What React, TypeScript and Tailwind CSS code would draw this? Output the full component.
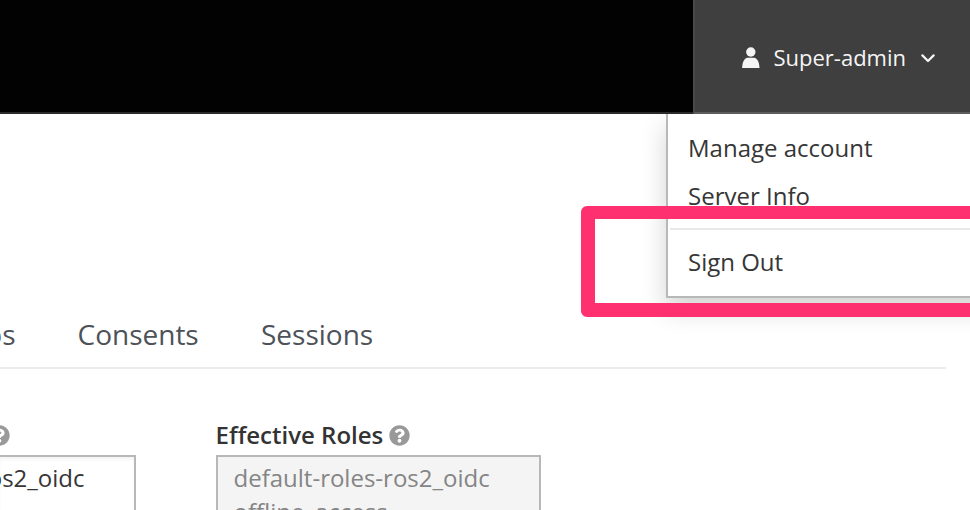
import { FaQuestionCircle } from "react-icons/fa";

function UserIcon() {
  return (
    <svg width="18" height="22" viewBox="0 0 18 22" fill="#f5f5f5" className="shrink-0">
      <circle cx="8.8" cy="5" r="4.7" />
      <path d="M0.1 21C0.3 14.2 3 10.9 5.4 10.7H12.2C14.6 10.9 17.3 14.2 17.5 21Z" />
    </svg>
  );
}

function ChevronIcon() {
  return (
    <svg width="14" height="9" viewBox="0 0 14 9" fill="none" stroke="#f5f5f5" strokeWidth="2.2" className="shrink-0">
      <path d="M1.4 1.4L7 7L12.6 1.4" strokeLinecap="round" strokeLinejoin="round" />
    </svg>
  );
}

function Header() {
  return (
    <header className="flex h-[114px] justify-end bg-[#020202]">
      <div className="flex-1 border-b-2 border-[#2b2a2b]" />
      <div className="flex w-[277px] items-center border-b-2 border-l-2 border-b-[#5d5b5d] border-l-[#494949] bg-[#3f3f3f] pt-[4px] pl-[46.5px] text-[#f5f5f5]">
        <UserIcon />
        <span className="ml-[14px] w-[147.5px] pb-[2px] text-[22px] leading-[34px] whitespace-nowrap">Super-admin</span>
        <ChevronIcon />
      </div>
    </header>
  );
}

function UserMenu() {
  return (
    <div className="absolute top-[114px] left-[666px] h-[184px] w-[340px] border-b-2 border-l-2 border-[#b8b8b8] bg-white text-[24px] leading-[48px] text-[#363636] shadow-[0_12px_24px_rgba(0,0,0,0.175)] [clip-path:inset(0_-60px_-60px_-60px)]">
      <div className="pt-[10px] pl-[20px]">Manage account</div>
      <div className="pl-[20px]">Server Info</div>
      <div className="mt-[8px] ml-[2px] h-[2px] bg-[#e9e9e9]" />
      <div className="mt-[8px] pl-[20px]">Sign Out</div>
    </div>
  );
}

function Tabs() {
  return (
    <nav className="relative mr-[24px] h-[255px] border-b-2 border-[#ececec] pt-[196px] text-[28px] leading-[48px] text-[#4d5258]">
      <div className="flex whitespace-nowrap">
        <div className="flex w-[77.5px] justify-start">
          <div className="flex w-[15.5px] justify-end">Role Mappings Groups</div>
        </div>
        <div className="w-[183.5px]">Consents</div>
        <div>Sessions</div>
      </div>
    </nav>
  );
}

function Roles() {
  return (
    <main className="flex h-[141px] overflow-hidden pt-[50px] text-[24px]">
      <section className="w-[216px]">
        <div className="flex h-[36px] w-[9.5px] items-center justify-end pb-[4px]">
          <FaQuestionCircle size={21} className="shrink-0 text-[#999]" />
        </div>
        <div className="h-[80px] w-[136px] border-2 border-l-0 border-[#b8b8b8] text-[#363636] shadow-[inset_0_3px_3px_rgba(0,0,0,0.04)]">
          <div className="flex w-[84.5px] justify-end pt-[4px] leading-[34px] whitespace-nowrap">default-roles-ros2_oidc</div>
        </div>
      </section>
      <section>
        <div className="flex h-[36px] items-center pb-[4px]">
          <span className="-ml-[0.5px] w-[173.5px] font-semibold whitespace-nowrap text-[#333]">Effective Roles</span>
          <FaQuestionCircle size={21} className="shrink-0 text-[#999]" />
        </div>
        <div className="h-[110px] w-[325px] border-2 border-[#b8b8b8] bg-[#f4f4f4] pt-[4px] pl-[15.5px] leading-[34px] text-[#858585]">
          <div>default-roles-ros2_oidc</div>
          <div>offline_access</div>
        </div>
      </section>
    </main>
  );
}

export default function App() {
  return (
    <div className="relative h-[510px] w-[970px] overflow-hidden bg-white font-['Open_Sans',sans-serif]">
      <Header />
      <Tabs />
      <Roles />
      <UserMenu />
      <div className="absolute top-[206px] left-[581px] h-[111px] w-[420px] rounded-[6px] border-[14px] border-t-[13px] border-[#ff306f]" />
    </div>
  );
}
